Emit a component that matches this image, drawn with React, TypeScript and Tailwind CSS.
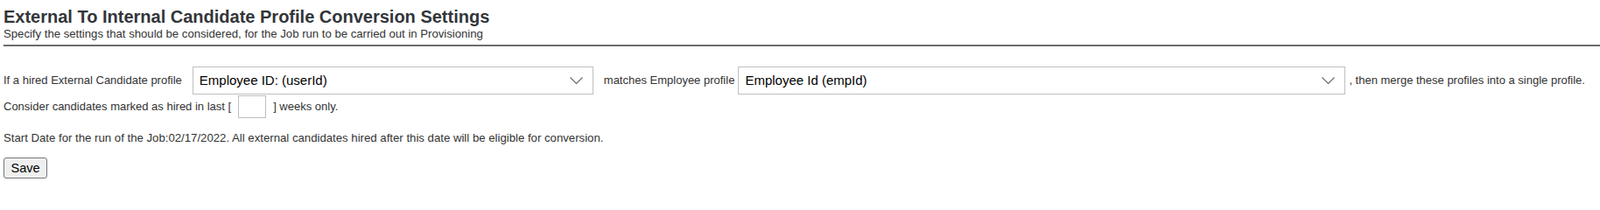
const Chevron = () => (
  <svg width="15" height="8" viewBox="0 0 15 8" fill="none" className="shrink-0">
    <polyline points="0.5,0.5 7.5,7.5 14.5,0.5" stroke="#6a6d70" strokeWidth="1.2" />
  </svg>
);

const FieldSelect = ({ value, width }: { value: string; width: string }) => (
  <div
    className={`flex h-8 items-center justify-between border border-[#bfbfbf] bg-white pl-[7px] pr-[11px] text-[15px] text-black ${width}`}
  >
    <span>{value}</span>
    <Chevron />
  </div>
);

const App = () => {
  return (
    <div className="min-h-[220px] bg-white pl-1 font-['Liberation_Sans',Arial,sans-serif] text-[#333]">
      {/* Page header */}
      <div className="border-b-2 border-[#6b6b6b] pt-[7px] pb-1">
        <h1 className="text-[20px] font-bold leading-6 text-[#32363a]">
          External To Internal Candidate Profile Conversion Settings
        </h1>
        <p className="text-[13.15px] leading-4">
          Specify the settings that should be considered, for the Job run to be carried out in Provisioning
        </p>
      </div>

      {/* Match rule */}
      <div className="mt-[23px] flex items-center text-[13px]">
        <span>If a hired External Candidate profile</span>
        <div className="ml-3">
          <FieldSelect value="Employee ID: (userId)" width="w-[458px]" />
        </div>
        <span className="ml-3">matches Employee profile</span>
        <div className="ml-1">
          <FieldSelect value="Employee Id (empId)" width="w-[694px]" />
        </div>
        <span className="ml-1">, then merge these profiles into a single profile.</span>
      </div>

      <div className="mt-px flex items-center text-[13px]">
        <span>Consider candidates marked as hired in last [</span>
        <input type="text" className="mx-2 h-[26px] w-8 border border-[#bfbfbf] bg-white outline-none" />
        <span>] weeks only.</span>
      </div>

      <p className="mt-[15px] text-[13.2px] leading-[15px]">
        Start Date for the run of the Job:02/17/2022. All external candidates hired after this date will be eligible for conversion.
      </p>

      <button
        type="button"
        className="mt-[15px] h-6 w-[50px] rounded-[3px] border border-[#767676] bg-[#efefef] text-[14.5px] leading-none text-black"
      >
        Save
      </button>
    </div>
  );
};

export default App;
